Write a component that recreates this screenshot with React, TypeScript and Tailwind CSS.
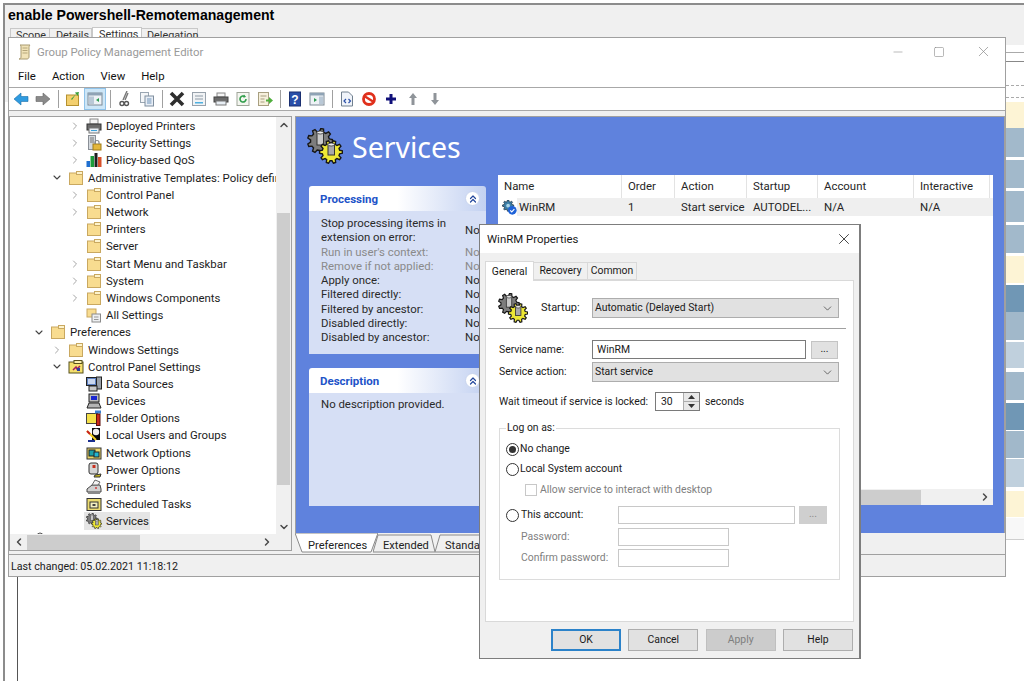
import type { ReactNode } from 'react'
import { ChevronDown, ChevronLeft, ChevronRight, ChevronUp, ChevronsUp, Minus, Square, X } from 'lucide-react'

const gearPath = (cx: number, cy: number, ro: number, ri: number, n: number) => {
  const s = (Math.PI * 2) / n
  const pts: string[] = []
  for (let k = 0; k < n; k++) {
    const a = k * s
    const seq: [number, number][] = [[a - 0.32 * s, ri], [a - 0.16 * s, ro], [a + 0.16 * s, ro], [a + 0.32 * s, ri]]
    for (const [t, r] of seq) pts.push(`${(cx + Math.cos(t) * r).toFixed(2)},${(cy + Math.sin(t) * r).toFixed(2)}`)
  }
  return 'M' + pts.join('L') + 'Z'
}

function Gears({ size }: { size: number }) {
  return (
    <svg width={size} height={size} viewBox="0 0 36 36" className="shrink-0">
      <path d={gearPath(13, 13, 12.5, 9.5, 9)} fill="#7d7d7d" stroke="#161616" strokeWidth="1.4" />
      <rect x="10" y="4" width="6.5" height="13" fill="#c8c8c8" stroke="#333" strokeWidth="1" />
      <ellipse cx="13.2" cy="4.5" rx="3.2" ry="1.5" fill="#eee" stroke="#333" strokeWidth=".8" />
      <path d={gearPath(24, 24, 11.5, 8.8, 10)} fill="#eee835" stroke="#161616" strokeWidth="1.4" />
      <rect x="21" y="16" width="6.5" height="11" fill="#a9a9a9" stroke="#333" strokeWidth="1" />
      <ellipse cx="24.2" cy="16.5" rx="3.2" ry="1.5" fill="#eee" stroke="#333" strokeWidth=".8" />
    </svg>
  )
}

function Ico({ children }: { children: ReactNode }) {
  return <svg width="16" height="16" viewBox="0 0 16 16" className="shrink-0">{children}</svg>
}

const Folder = () => (
  <Ico>
    <rect x="1.5" y="3" width="13" height="11.5" fill="#f8dc90" stroke="#c9a860" />
    <rect x="8.5" y="1.5" width="6" height="3" fill="#fdf3cc" stroke="#c9a860" />
  </Ico>
)
const Printer = () => (
  <Ico>
    <rect x="4" y="1" width="8" height="5" fill="#f4f4f4" stroke="#888" />
    <rect x="1" y="6" width="14" height="6" fill="#6b6b6b" stroke="#333" />
    <rect x="3" y="10" width="10" height="5" fill="#e8eef4" stroke="#777" />
    <rect x="5" y="12" width="6" height="1" fill="#3aa0d8" />
  </Ico>
)
const Security = () => (
  <Ico>
    <rect x="2.5" y="0.5" width="7" height="14" fill="#d4d9de" stroke="#8a8f96" />
    <path d="M4 3h4M4 5h4M4 7h4" stroke="#777" />
    <rect x="7" y="9" width="8" height="6" fill="#e4b73c" stroke="#a07c18" />
    <path d="M9 9V7.5a2 2 0 0 1 4 0V9" fill="none" stroke="#888" strokeWidth="1.2" />
  </Ico>
)
const Chart = () => (
  <Ico>
    <rect x="0.5" y="9" width="3.5" height="6" fill="#1f6fd0" />
    <rect x="4.5" y="4" width="3.5" height="11" fill="#1c9c3a" />
    <rect x="8.5" y="1" width="3" height="14" fill="#202020" />
    <rect x="12" y="5" width="3.5" height="10" fill="#d8502a" />
  </Ico>
)
const AllSettings = () => (
  <Ico>
    <rect x="1" y="2" width="9" height="8" fill="#f8dc90" stroke="#c9a860" />
    <rect x="6" y="7" width="8.5" height="8" fill="#eef0f2" stroke="#8a8a8a" />
    <path d="M8 10h4.5M8 12.5h4.5" stroke="#999" />
  </Ico>
)
const CpSettings = () => (
  <Ico>
    <rect x="1" y="3" width="14" height="11" fill="#f4e06e" stroke="#57501d" />
    <rect x="6" y="1.5" width="8" height="3" fill="#fbf0b0" stroke="#57501d" />
    <path d="M5 11l3-3 1 2 3-3" stroke="#a01c60" strokeWidth="1.5" fill="none" />
    <rect x="9" y="9" width="3" height="3" fill="#2a3ea0" />
  </Ico>
)
const DataSources = () => (
  <Ico>
    <rect x="0.5" y="1.5" width="10" height="8" fill="#5c7fc0" stroke="#222" />
    <rect x="2" y="3" width="7" height="5" fill="#c9d6ee" />
    <rect x="10.5" y="1" width="5" height="12" fill="#9aa0a8" stroke="#222" />
    <rect x="3" y="10" width="8" height="5" fill="#c8c8c8" stroke="#222" />
  </Ico>
)
const Devices = () => (
  <Ico>
    <rect x="3" y="1" width="10" height="8" fill="#bdbdbd" stroke="#222" />
    <rect x="5" y="3" width="6" height="4" fill="#1c28d0" />
    <path d="M1 15l2-5h10l2 5z" fill="#b4b4b4" stroke="#222" />
  </Ico>
)
const FolderOpts = () => (
  <Ico>
    <rect x="0.5" y="3.5" width="11" height="10" fill="#f4e04a" stroke="#444" />
    <rect x="9" y="0.5" width="6" height="3" fill="#3a80d0" />
    <rect x="10.5" y="4" width="3.5" height="11.5" fill="#c8281c" stroke="#5a0f0a" />
  </Ico>
)
const Users = () => (
  <Ico>
    <path d="M6 1h8v12H6z" fill="#0c0c0c" />
    <circle cx="10" cy="5" r="3.2" fill="#f0f0f0" />
    <path d="M1 4l9 9" stroke="#f4d020" strokeWidth="2" />
    <path d="M1 4l3 3" stroke="#c82020" strokeWidth="2" />
    <path d="M2 14h7" stroke="#1a2f90" strokeWidth="2" />
  </Ico>
)
const UserCfg = () => (
  <Ico>
    <circle cx="8" cy="5" r="3" fill="#e8e8e8" stroke="#555" />
    <path d="M3 15c0-4 2-6 5-6s5 2 5 6z" fill="#5a78b8" stroke="#334" />
  </Ico>
)
const NetOpts = () => (
  <Ico>
    <rect x="1" y="3" width="14" height="11" fill="#e8d468" stroke="#333" />
    <rect x="3" y="5" width="6" height="6" fill="#1ca0a8" stroke="#222" />
    <rect x="8" y="7" width="5" height="5" fill="#23b5d0" stroke="#222" />
  </Ico>
)
const Power = () => (
  <Ico>
    <rect x="3" y="1" width="9" height="11" rx="2" fill="#d4d4d4" stroke="#333" />
    <rect x="6.5" y="3" width="3" height="3" fill="#c83020" />
    <path d="M9 13l6-1-1 3H8z" fill="#c8b820" stroke="#333" />
  </Ico>
)
const Printer2 = () => (
  <Ico>
    <path d="M1 10l5-4h8l1 4v3H1z" fill="#d0d0d0" stroke="#444" />
    <path d="M6 6l3-5 5 2-2 3z" fill="#f4f4f4" stroke="#666" />
    <circle cx="10" cy="9" r="1" fill="#d04040" />
    <rect x="2" y="13" width="12" height="2" fill="#8a8a8a" />
  </Ico>
)
const Tasks = () => (
  <Ico>
    <rect x="1" y="2.5" width="14" height="12" fill="#ecdc70" stroke="#333" />
    <rect x="4" y="6" width="8" height="6" fill="#f4f0c0" stroke="#333" />
    <rect x="6.5" y="8" width="3" height="2" fill="#444" />
  </Ico>
)
const SvcSmall = () => <Gears size={16} />

type Row = { level: number; label: string; icon: ReactNode; arrow?: 'r' | 'd'; selected?: boolean }

const rows: Row[] = [
  { level: 2, label: 'Deployed Printers', icon: <Printer />, arrow: 'r' },
  { level: 2, label: 'Security Settings', icon: <Security />, arrow: 'r' },
  { level: 2, label: 'Policy-based QoS', icon: <Chart />, arrow: 'r' },
  { level: 1, label: 'Administrative Templates: Policy definitions (ADMX files)', icon: <Folder />, arrow: 'd' },
  { level: 2, label: 'Control Panel', icon: <Folder />, arrow: 'r' },
  { level: 2, label: 'Network', icon: <Folder />, arrow: 'r' },
  { level: 2, label: 'Printers', icon: <Folder /> },
  { level: 2, label: 'Server', icon: <Folder /> },
  { level: 2, label: 'Start Menu and Taskbar', icon: <Folder />, arrow: 'r' },
  { level: 2, label: 'System', icon: <Folder />, arrow: 'r' },
  { level: 2, label: 'Windows Components', icon: <Folder />, arrow: 'r' },
  { level: 2, label: 'All Settings', icon: <AllSettings /> },
  { level: 0, label: 'Preferences', icon: <Folder />, arrow: 'd' },
  { level: 1, label: 'Windows Settings', icon: <Folder />, arrow: 'r' },
  { level: 1, label: 'Control Panel Settings', icon: <CpSettings />, arrow: 'd' },
  { level: 2, label: 'Data Sources', icon: <DataSources /> },
  { level: 2, label: 'Devices', icon: <Devices /> },
  { level: 2, label: 'Folder Options', icon: <FolderOpts /> },
  { level: 2, label: 'Local Users and Groups', icon: <Users /> },
  { level: 2, label: 'Network Options', icon: <NetOpts /> },
  { level: 2, label: 'Power Options', icon: <Power /> },
  { level: 2, label: 'Printers', icon: <Printer2 /> },
  { level: 2, label: 'Scheduled Tasks', icon: <Tasks /> },
  { level: 2, label: 'Services', icon: <SvcSmall />, selected: true },
  { level: -1, label: 'User Configuration', icon: <UserCfg /> },
]

const indent: Record<number, string> = { [-1]: 'pl-[5px]', 0: 'pl-[23px]', 1: 'pl-[41px]', 2: 'pl-[59px]' }

function TreeRow({ row }: { row: Row }) {
  return (
    <div className={`flex h-[17.2px] items-center whitespace-nowrap ${indent[row.level]}`}>
      <span className="flex w-[12px] shrink-0 items-center justify-center">
        {row.arrow === 'r' && <ChevronRight size={12} strokeWidth={2} className="text-[#a6a6a6]" />}
        {row.arrow === 'd' && <ChevronDown size={13} strokeWidth={2.2} className="text-[#444]" />}
      </span>
      <span className={`ml-[3px] flex h-[18px] items-center pl-[2px] pr-[1px] ${row.selected ? 'bg-[#e5e5e5]' : ''}`}>
        {row.icon}
        <span className="ml-[4px]">{row.label}</span>
      </span>
    </div>
  )
}

const Sep = () => (
  <span className="flex w-[8px] shrink-0 justify-center">
    <span className="h-[18px] w-px bg-[#a0a0a0]" />
  </span>
)
const Tool = ({ children, active }: { children: ReactNode; active?: boolean }) => (
  <span className={`flex h-[22px] w-[22px] shrink-0 items-center justify-center ${active ? 'border border-[#8fc3ea] bg-[#cde6f7]' : ''}`}>
    {children}
  </span>
)

function Toolbar() {
  return (
    <div className="flex h-[22px] items-center pl-[1px]">
      <Tool><Ico><path d="M1 8l7-6v3.5h7v5H8V14z" fill="#2f9be0" stroke="#1b6ea8" strokeWidth=".6" /></Ico></Tool>
      <Tool><Ico><path d="M15 8L8 2v3.5H1v5h7V14z" fill="#8a8a8a" stroke="#666" strokeWidth=".6" /></Ico></Tool>
      <Sep />
      <Tool><Ico><rect x="1.5" y="4" width="12" height="10.5" fill="#f3cf6e" stroke="#b59130" /><path d="M7 9l4-6 2 2 1-4-4 .5 1 1.5-5 5z" fill="#3ca03c" /></Ico></Tool>
      <Tool active><Ico><rect x="1" y="2" width="14" height="12" fill="#eef2f6" stroke="#7d8a96" /><rect x="1" y="2" width="14" height="2.5" fill="#8fa3b5" /><rect x="2" y="5.5" width="5" height="7.5" fill="#b9c8d6" /><path d="M12 7l-3 2 3 2z" fill="#2c9c50" /></Ico></Tool>
      <Sep />
      <Tool><Ico><path d="M10 0L6 9M11 2L8 9" stroke="#777" strokeWidth="1.4" /><circle cx="5" cy="12.5" r="2" fill="none" stroke="#555" strokeWidth="1.4" /><circle cx="9.5" cy="12.5" r="2" fill="none" stroke="#555" strokeWidth="1.4" /></Ico></Tool>
      <Tool><Ico><rect x="1.5" y="1.5" width="8" height="10" fill="#f4f6f8" stroke="#9aa6b2" /><rect x="6" y="5" width="8.5" height="10" fill="#e8eef6" stroke="#7f8e9e" /><path d="M8 8h4.5M8 10h4.5M8 12h4.5" stroke="#6f93b8" /></Ico></Tool>
      <Sep />
      <Tool><Ico><path d="M2 2l12 12M14 2L2 14" stroke="#2e2e2e" strokeWidth="3.6" /></Ico></Tool>
      <Tool><Ico><rect x="1.5" y="1.5" width="13" height="13" fill="#f1f3f5" stroke="#98a2ac" /><path d="M4 5h8M4 8h8" stroke="#8d9aa6" /><rect x="4" y="11" width="8" height="1.5" fill="#4fb0e0" /></Ico></Tool>
      <Tool><Ico><rect x="4" y="2" width="8" height="4" fill="#f5f5f5" stroke="#888" /><rect x="1" y="6" width="14" height="5" fill="#6a6a6a" stroke="#444" /><rect x="3" y="10" width="10" height="4" fill="#e8eef4" stroke="#777" /></Ico></Tool>
      <Tool><Ico><rect x="2" y="1.5" width="12" height="13" fill="#f4f6f0" stroke="#a0a69a" /><path d="M11 8a3 3 0 1 1-1-2.2" fill="none" stroke="#2f9d4a" strokeWidth="1.6" /><path d="M9 3.5l2 2.5-3 .5z" fill="#2f9d4a" /></Ico></Tool>
      <Tool><Ico><rect x="1.5" y="1.5" width="10" height="13" fill="#f6f0dc" stroke="#a89f80" /><path d="M3.5 5h6M3.5 8h4M3.5 11h4" stroke="#a89f80" /><path d="M9 8.5h3V6l4 3.5L12 13v-2.5H9z" fill="#4fae3c" /></Ico></Tool>
      <Sep />
      <Tool><Ico><rect x="2.5" y="1" width="11" height="14" fill="#2a4fa8" stroke="#1a2f70" /><text x="8" y="12.5" textAnchor="middle" fontSize="12" fontWeight="700" fill="#fff" fontFamily="Liberation Sans, sans-serif">?</text></Ico></Tool>
      <Tool><Ico><rect x="1" y="2" width="14" height="12" fill="#eef2f6" stroke="#7d8a96" /><rect x="1" y="2" width="14" height="2.5" fill="#8fa3b5" /><rect x="10" y="5.5" width="4" height="7.5" fill="#b9c8d6" /><path d="M5 7l3 2-3 2z" fill="#2c9c50" /></Ico></Tool>
      <Sep />
      <Tool><Ico><path d="M2.5 1h7l4 4v10h-11z" fill="#f0f4fa" stroke="#71808f" /><path d="M7 8l-2 2 2 2M9.5 8l2 2-2 2" fill="none" stroke="#2a4fa8" strokeWidth="1.2" /></Ico></Tool>
      <Tool><Ico><circle cx="8" cy="8" r="5.5" fill="#fff" stroke="#e0301c" strokeWidth="2.8" /><path d="M4 5.5l8 5" stroke="#e0301c" strokeWidth="2.4" /></Ico></Tool>
      <Tool><Ico><path d="M8 3v10M3 8h10" stroke="#10107a" strokeWidth="3" /></Ico></Tool>
      <Tool><Ico><path d="M8 2l4 5H9.5v7h-3V7H4z" fill="#8f9499" /></Ico></Tool>
      <Tool><Ico><path d="M8 14l4-5H9.5V2h-3v7H4z" fill="#8f9499" /></Ico></Tool>
    </div>
  )
}

function ScrollCorner({ dir }: { dir: 'l' | 'r' | 'u' | 'd' }) {
  const cls = 'text-[#4a4a4a]'
  if (dir === 'l') return <ChevronLeft size={12} strokeWidth={3} className={cls} />
  if (dir === 'r') return <ChevronRight size={12} strokeWidth={3} className={cls} />
  if (dir === 'u') return <ChevronUp size={12} strokeWidth={3} className={cls} />
  return <ChevronDown size={12} strokeWidth={3} className={cls} />
}

function Tree() {
  return (
    <div className="flex h-[435px] w-[283px] shrink-0 flex-col border border-[#a0a0a0] bg-white text-[#1c1c1c]">
      <div className="flex min-h-0 flex-1">
        <div className="min-w-0 flex-1 overflow-hidden pt-[0.5px]">
          {rows.map((r, i) => (
            <TreeRow key={i} row={r} />
          ))}
        </div>
        <div className="flex w-[15px] shrink-0 flex-col bg-[#f0f0f0]">
          <div className="flex h-[96px] items-start justify-center pt-[2px]"><ScrollCorner dir="u" /></div>
          <div className="mx-px h-[272px] bg-[#cdcdcd]" />
          <div className="flex flex-1 items-end justify-center pb-[1px]"><ScrollCorner dir="d" /></div>
        </div>
      </div>
      <div className="flex h-[16px] shrink-0 items-center bg-[#f0f0f0]">
        <span className="flex w-[17px] justify-center"><ScrollCorner dir="l" /></span>
        <span className="h-[15px] w-[113px] bg-[#cdcdcd]" />
        <span className="flex-1" />
        <span className="flex w-[17px] justify-center"><ScrollCorner dir="r" /></span>
        <span className="w-[16px]" />
      </div>
    </div>
  )
}

const procRows: { label: string; dim?: boolean }[] = [
  { label: 'Run in user\'s context:', dim: true },
  { label: 'Remove if not applied:', dim: true },
  { label: 'Apply once:' },
  { label: 'Filtered directly:' },
  { label: 'Filtered by ancestor:' },
  { label: 'Disabled directly:' },
  { label: 'Disabled by ancestor:' },
]

function PanelHead({ title }: { title: string }) {
  return (
    <div className="flex h-[25px] items-center justify-between rounded-t-[3px] bg-gradient-to-r from-white via-white to-[#c3d1f1] pl-[11px] pr-[6px]">
      <span className="text-[11.5px] font-bold text-[#2153c8]">{title}</span>
      <span className="flex h-[15px] w-[15px] items-center justify-center rounded-full border border-[#c8d4ee] bg-white">
        <ChevronsUp size={12} strokeWidth={2.4} className="text-[#23479c]" />
      </span>
    </div>
  )
}

function Processing() {
  return (
    <div className="w-[177px]">
      <PanelHead title="Processing" />
      <div className="h-[143px] bg-[#d6dff5] pl-[12px] pt-[5px] leading-[14.3px] text-[#2a2a2a]">
        <div className="flex items-center">
          <span className="w-[144px]">Stop processing items in extension on error:</span>
          <span>No</span>
        </div>
        {procRows.map(r => (
          <div key={r.label} className={`flex ${r.dim ? 'text-[#8a8a8a]' : ''}`}>
            <span className="w-[144px]">{r.label}</span>
            <span>No</span>
          </div>
        ))}
      </div>
    </div>
  )
}

const listCols = 'grid grid-cols-[124px_53px_72px_71px_96px_76px_3px]'

function ServiceList() {
  const heads = ['Name', 'Order', 'Action', 'Startup', 'Account', 'Interactive']
  const vals = ['1', 'Start service', 'AUTODEL...', 'N/A', 'N/A']
  return (
    <div className="flex h-[330px] w-[495px] flex-col bg-white text-[#262626]">
      <div className={`${listCols} h-[23px] items-stretch`}>
        {heads.map(h => (
          <span key={h} className="flex items-center border-r border-[#e3e3e3] pb-[2px] pl-[6px]">{h}</span>
        ))}
        <span />
      </div>
      <div className={`${listCols} h-[18px]`}>
        <span className="flex items-center">
          <span className="flex h-full w-[19px] items-center justify-end bg-white">
            <svg width="15" height="15" viewBox="0 0 16 16">
              <path d={gearPath(6.5, 6, 6, 4.4, 8)} fill="#3c7ea6" stroke="#123" strokeWidth=".7" />
              <circle cx="6.5" cy="6" r="2" fill="#a9d3e8" />
              <circle cx="11" cy="11" r="4.6" fill="#1f62d8" />
              <path d="M8.8 11l1.6 1.7 2.8-3" stroke="#fff" strokeWidth="1.2" fill="none" />
            </svg>
          </span>
          <span className="flex h-full flex-1 items-center bg-[#efefef] pl-[2px]">WinRM</span>
        </span>
        {vals.map((v, i) => (
          <span key={i} className="flex items-center bg-[#efefef] pl-[6px] whitespace-nowrap">{v}</span>
        ))}
        <span className="bg-[#efefef]" />
      </div>
      <div className="flex-1" />
      <div className="flex h-[16px] items-center bg-[#f0f0f0]">
        <span className="h-[15px] w-[423px] bg-[#cdcdcd]" />
        <span className="flex-1" />
        <span className="pr-[2px]"><ScrollCorner dir="r" /></span>
      </div>
    </div>
  )
}

function PageTab({ label, w, active, text }: { label: string; w: number; active?: boolean; text: string }) {
  const pts = active
    ? `0,0 ${w},0 ${w - 7},19 7,19`
    : `5,2 ${w - 4},2 ${w},19 0,19`
  return (
    <span className={`relative flex h-[20px] shrink-0 items-center pt-[5px] text-[11.1px] ${text}`} style={{ width: w }}>
      <svg width={w} height="20" className="absolute left-0 top-0">
        <polygon points={pts} fill={active ? '#fff' : '#f0f0f0'} stroke="#8a8a8a" strokeWidth="1" />
      </svg>
      <span className="relative">{label}</span>
    </span>
  )
}

function RightPane() {
  return (
    <div className="ml-[3px] flex h-[437px] w-[710px] flex-col">
      <div className="flex h-[417px] flex-col border-l border-r border-t border-[#a0a0a0] bg-[#5f82dd]">
        <div className="flex h-[58px] items-center pl-[11px]">
          <Gears size={36} />
          <span className="ml-[9px] mt-[2px] font-['Noto_Sans',sans-serif] text-[28.5px] leading-[36px] text-white">Services</span>
        </div>
        <div className="flex">
          <div className="ml-[13px] mt-[11px] w-[177px]">
            <Processing />
            <div className="mt-[14px]">
              <PanelHead title="Description" />
              <div className="h-[113px] bg-[#d6dff5] pl-[12px] pt-[4px] text-[#2a2a2a]">No description provided.</div>
            </div>
          </div>
          <div className="ml-[12px]">
            <ServiceList />
          </div>
        </div>
      </div>
      <div className="flex h-[20px] items-start">
        <PageTab label="Preferences" w={83} active text="pl-[13px]" />
        <span className="-ml-[5px]"><PageTab label="Extended" w={62} text="pl-[10px]" /></span>
        <PageTab label="Standard" w={62} text="pl-[10px]" />
      </div>
    </div>
  )
}

const selectCls = 'flex h-[20px] w-[247px] items-center justify-between border border-[#adadad] bg-[#e1e1e1] pl-[2px] pr-[4px]'
const btnCls = 'flex h-[22px] w-[70px] items-center justify-center border border-[#adadad] bg-[#e1e1e1]'

function Radio({ on }: { on?: boolean }) {
  return (
    <span className="flex h-[13px] w-[13px] shrink-0 items-center justify-center rounded-full border border-[#333] bg-white">
      {on && <span className="h-[7px] w-[7px] rounded-full bg-[#333]" />}
    </span>
  )
}

function Dialog() {
  return (
    <div className="absolute left-[479px] top-[224px] flex h-[435px] w-[382px] flex-col border border-r-2 border-[#7d7d7d] bg-[#f0f0f0] text-[10.4px] leading-[16px] text-[#1a1a1a]">
      <div className="flex h-[28px] shrink-0 items-center justify-between bg-white pl-[7px] pr-[6px]">
        <span className="text-[11.4px]">WinRM Properties</span>
        <X size={18} strokeWidth={1.1} className="text-[#222]" />
      </div>
      <div className="flex h-[27px] items-end pl-[5px]">
        <span className="relative z-10 -mb-px flex h-[20px] w-[49px] items-center justify-center border border-b-0 border-[#d9d9d9] bg-white">General</span>
        <span className="flex h-[18px] w-[54px] items-center justify-center border-y border-r border-[#d9d9d9]">Recovery</span>
        <span className="flex h-[18px] w-[49px] items-center justify-center border-y border-r border-[#d9d9d9]">Common</span>
      </div>
      <div className="mx-[5px] h-[342px] border border-[#d9d9d9] bg-white">
        <div className="mt-[17px] flex h-[20px] items-center pl-[12px]">
          <Gears size={30} />
          <span className="ml-[13px] w-[51px] text-[11px]">Startup:</span>
          <div className={selectCls}>
            <span>Automatic (Delayed Start)</span>
            <ChevronDown size={13} strokeWidth={1.4} className="text-[#444]" />
          </div>
        </div>
        <div className="ml-[2px] mt-[10px] h-px w-[358px] bg-[#a0a0a0]" />
        <div className="mt-[11px] flex h-[19px] items-center pl-[13px]">
          <span className="w-[93px]">Service name:</span>
          <span className="flex h-[19px] w-[214px] items-center border border-[#7a7a7a] pl-[4px]">WinRM</span>
          <span className="ml-[5px] flex h-[18px] w-[27px] items-center justify-center border border-[#c4c4c4] bg-[#e1e1e1] pb-[2px]">...</span>
        </div>
        <div className="mt-[3px] flex h-[20px] items-center pl-[13px]">
          <span className="w-[93px]">Service action:</span>
          <div className={selectCls}>
            <span>Start service</span>
            <ChevronDown size={13} strokeWidth={1.4} className="text-[#444]" />
          </div>
        </div>
        <div className="mt-[10px] flex h-[19px] items-center pl-[13px]">
          <span className="w-[156px] whitespace-nowrap">Wait timeout if service is locked:</span>
          <span className="flex h-[19px] w-[45px] items-center border border-[#7a7a7a] pl-[5px]">
            <span className="flex-1">30</span>
            <span className="flex h-full w-[16px] flex-col border-l border-[#adadad] bg-[#e8e8e8]">
              <span className="flex flex-1 items-center justify-center border-b border-[#adadad]">
                <svg width="7" height="4"><path d="M3.5 0L7 4H0z" fill="#333" /></svg>
              </span>
              <span className="flex flex-1 items-center justify-center">
                <svg width="7" height="4"><path d="M3.5 4L7 0H0z" fill="#333" /></svg>
              </span>
            </span>
          </span>
          <span className="ml-[5px]">seconds</span>
        </div>
        <fieldset className="ml-[13px] mt-[10px] w-[341px] border border-[#dcdcdc] pb-[12px]">
          <legend className="ml-[6px] px-[1px] leading-[14px]">Log on as:</legend>
          <div className="ml-[6px] mt-[6px] flex h-[16px] items-center">
            <Radio on />
            <span className="ml-[1px]">No change</span>
          </div>
          <div className="ml-[6px] mt-[4px] flex h-[16px] items-center">
            <Radio />
            <span className="ml-[1px]">Local System account</span>
          </div>
          <div className="ml-[25px] mt-[5px] flex h-[16px] items-center text-[#7f7f7f]">
            <span className="h-[12px] w-[12px] border border-[#c8c8c8] bg-white" />
            <span className="ml-[3px]">Allow service to interact with desktop</span>
          </div>
          <div className="ml-[6px] mt-[8px] flex h-[18px] items-center">
            <Radio />
            <span className="ml-[2px] w-[97px]">This account:</span>
            <span className="h-[18px] w-[177px] border border-[#c8c8c8]" />
            <span className="ml-[4px] flex h-[18px] w-[28px] items-center justify-center bg-[#cfcfcf] pb-[2px] text-[#8a8a8a]">...</span>
          </div>
          <div className="ml-[21px] mt-[4px] flex h-[18px] items-center text-[#7f7f7f]">
            <span className="w-[97px]">Password:</span>
            <span className="h-[18px] w-[111px] border border-[#c8c8c8]" />
          </div>
          <div className="ml-[21px] mt-[3px] flex h-[18px] items-center text-[#7f7f7f]">
            <span className="w-[97px] whitespace-nowrap">Confirm password:</span>
            <span className="h-[18px] w-[111px] border border-[#c8c8c8]" />
          </div>
        </fieldset>
      </div>
      <div className="mt-[7px] flex justify-end gap-[7.33px] pr-[6px]">
        <span className="flex h-[22px] w-[70px] items-center justify-center border-2 border-[#2b82c9] bg-[#e1e1e1]">OK</span>
        <span className={btnCls}>Cancel</span>
        <span className="flex h-[22px] w-[70px] items-center justify-center border border-[#bfbfbf] bg-[#cccccc] text-[#7f7f7f]">Apply</span>
        <span className={btnCls}>Help</span>
      </div>
    </div>
  )
}

function EditorWindow() {
  return (
    <div className="absolute left-[8px] top-[37px] flex h-[540px] w-[998px] flex-col border border-[#a0a0a0] bg-[#f0f0f0] text-[#222]">
      <div className="flex h-[29px] shrink-0 items-center bg-white pb-[2px] pl-[8px]">
        <svg width="15" height="16" viewBox="0 0 15 16" className="shrink-0">
          <path d="M3 1h10c-1 1-1 2-1 3v9c0 1-1 2-2 2H2c1 0 2-1 2-2V3c0-1-.5-2-1-2z" fill="#f1e3b8" stroke="#a89a70" />
          <path d="M5.5 4h5M5.5 6.5h5M5.5 9h5" stroke="#b5a67a" />
        </svg>
        <span className="ml-[5px] text-[#9a9a9a]">Group Policy Management Editor</span>
        <span className="flex-1" />
        <Minus size={14} strokeWidth={1} className="mr-[28px] text-[#8a8a8a]" />
        <Square size={12} strokeWidth={1.2} className="mr-[30px] text-[#8a8a8a]" />
        <X size={17} strokeWidth={1} className="mr-[13px] text-[#8a8a8a]" />
      </div>
      <div className="flex h-[20px] shrink-0 items-center gap-[16px] bg-white pb-[3px] pl-[9px] text-[#111]">
        <span>File</span>
        <span>Action</span>
        <span>View</span>
        <span>Help</span>
      </div>
      <div className="h-[24px] shrink-0 border-y border-[#a8a8a8] bg-white">
        <Toolbar />
      </div>
      <div className="flex h-[443px] shrink-0 pt-[5px]">
        <Tree />
        <RightPane />
      </div>
      <div className="flex flex-1 items-center border-t border-[#a0a0a0] pl-[2px] pt-[2px] text-[10.7px] text-[#1a1a1a]">Last changed: 05.02.2021 11:18:12</div>
    </div>
  )
}

const strip: string[] = [
  'h-[26px] bg-[#fdf4d5]',
  'h-[29px] mb-[3px] bg-[#a2b9cb]',
  'h-[28px] mb-[3px] bg-[#a2b9cb]',
  'h-[31px] mb-[3px] bg-[#a2b9cb]',
  'h-[28px] mb-[3px] bg-[#a2b9cb]',
  'h-[27px] mb-[2px] bg-[#fdf4d5]',
  'h-[27px] bg-[#7097b5]',
  'h-[28px] mb-[2px] bg-[#a1b8ca]',
  'h-[26px] mb-[4px] bg-[#c0d0dd]',
  'h-[28px] mb-[3px] bg-[#a1b8ca]',
  'h-[27px] mb-[1px] bg-[#7097b5]',
  'h-[27px] mb-[1px] bg-[#a1b8ca]',
  'h-[28px] mb-[4px] bg-[#c0d0dd]',
  'h-[26px] mb-[1px] bg-[#fdf4d5]',
  'h-[22px] border-b border-[#cfcfcf] bg-[#f8f8f8]',
]

export default function App() {
  return (
    <div className="relative h-[681px] w-[1024px] overflow-hidden bg-white font-['Roboto',sans-serif] text-[11.4px] leading-[14px]">
      {/* window behind the editor */}
      <div className="absolute inset-0 ml-[3px] mt-[3px] flex flex-col border-l-2 border-t-2 border-[#8c8c8c]">
        <div className="h-[97px] shrink-0 bg-[#f0f0f0]">
          <div className="pl-[3px] pt-[2px] font-['Liberation_Sans',sans-serif] text-[14.1px] font-bold leading-[16px] text-black">enable Powershell-Remotemanagement</div>
          <div className="mt-[4px] flex items-end pl-[5px] text-[10.8px] text-[#333]">
            <span className="h-[14px] w-[40px] border-x border-t border-[#c8c8c8] pl-[5px]">Scope</span>
            <span className="h-[14px] w-[42px] border-r border-t border-[#c8c8c8] pl-[6px]">Details</span>
            <span className="h-[15px] w-[50px] border-x border-t border-[#c8c8c8] bg-white pl-[6px]">Settings</span>
            <span className="h-[14px] w-[56px] border-r border-t border-[#c8c8c8] pl-[5px]">Delegation</span>
          </div>
        </div>
      </div>
      <div className="absolute left-[1006px] top-[37px] flex w-[18px] flex-col bg-white">
        <div className="h-[8px] bg-[#f0f0f0]" />
        <div className="h-[8px] border-b border-[#aaaaaa]" />
        <div className="h-[9px] border-b border-[#888888]" />
        <div className="h-[24px] border-b border-dashed border-[#aaaaaa]" />
        <div className="h-[12px] border-b border-dashed border-[#aaaaaa]" />
        <div className="h-[4px]" />
        {strip.map((c, i) => (
          <div key={i} className={c} />
        ))}
      </div>
      <div className="absolute bottom-0 left-[17px] top-[577px] w-px bg-[#555]" />
      <EditorWindow />
      <Dialog />
    </div>
  )
}
